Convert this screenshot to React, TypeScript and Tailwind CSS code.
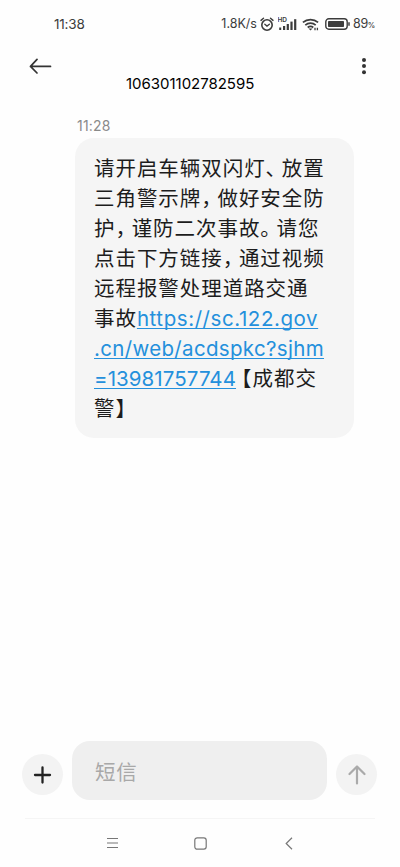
import type { ReactNode } from "react";

function Comma({ children }: { children: ReactNode }) {
  return <span className="tracking-[-4.3px]">{children}</span>;
}

function StatusBar() {
  return (
    <div className="flex h-12 items-center justify-between pl-[54px] pr-[25px] text-[#3c3c3c]">
      <span className="text-[13.5px] tracking-[-0.2px]">11:38</span>
      <div className="flex items-center">
        <span className="text-[12.5px] tracking-[0px]">1.8K/s</span>
        <svg className="ml-[3px]" width="14" height="15" viewBox="0 0 14 15" fill="none" stroke="currentColor" strokeLinecap="round">
          <circle cx="7" cy="8" r="5.2" strokeWidth="1.6" />
          <path d="M1 3.4 3.5 1.3M13 3.4 10.5 1.3" strokeWidth="1.4" />
          <path d="m4.8 7.2 2.2 1.9 2.4-1.9" strokeWidth="1.3" />
        </svg>
        <svg className="ml-[4px]" width="19" height="15" viewBox="0 0 19 15" fill="currentColor">
          <text x="-.5" y="5.4" fontSize="6.5" fontWeight="600">HD</text>
          <rect x="1.2" y="10.5" width="2" height="2.5" />
          <rect x="5" y="9" width="2.2" height="4" />
          <rect x="8.7" y="7" width="2.2" height="6" />
          <rect x="12.4" y="4.6" width="2.2" height="8.4" />
          <rect x="16.1" y="2.2" width="2.2" height="10.8" />
        </svg>
        <svg className="ml-[5px]" width="18" height="15" viewBox="0 0 18 15" fill="none" stroke="currentColor" strokeWidth="1.7">
          <path d="M.9 5.4a11.5 11.5 0 0 1 15.2 0M3.3 8.1a7.8 7.8 0 0 1 10.4 0M5.7 10.5a4.5 4.5 0 0 1 5.6 0" />
          <path d="m6.5 11.4 2 2.1 2-2.1z" fill="currentColor" stroke="none" />
          <path d="M13 10.7v2.6M15.4 10.7v2.6" strokeWidth="1.3" />
        </svg>
        <svg className="ml-[5px]" width="25" height="12" viewBox="0 0 25 12" fill="none">
          <rect x=".8" y=".8" width="21.4" height="10.4" rx="3" stroke="currentColor" strokeWidth="1.4" />
          <rect x="3" y="3" width="16" height="6" rx=".8" fill="currentColor" />
          <path d="M24 4.3v3.4" stroke="currentColor" strokeWidth="1.5" />
        </svg>
        <span className="ml-[3px] text-[12.5px] tracking-[-0.3px]">
          89<span className="text-[7.5px] font-medium">%</span>
        </span>
      </div>
    </div>
  );
}

function Header() {
  return (
    <header className="flex h-[60px] items-start pl-[29px] pr-[32px]">
      <svg className="mt-[10px]" width="23" height="16" viewBox="0 0 23 16" fill="none" stroke="#333" strokeWidth="1.7" strokeLinecap="round" strokeLinejoin="round">
        <path d="M21.5 8.4H1.5M8 1.4l-6.5 7 6.5 6.6" />
      </svg>
      <h1 className="ml-[74px] mt-[26px] text-[15px] leading-5 tracking-[-0.02px] text-black">106301102782595</h1>
      <svg className="ml-auto mt-[9px]" width="8" height="18" viewBox="0 0 8 18" fill="#333">
        <circle cx="4" cy="3" r="2" />
        <circle cx="4" cy="9" r="2" />
        <circle cx="4" cy="15.2" r="2" />
      </svg>
    </header>
  );
}

function Message() {
  const link = "text-[#2490dc] underline decoration-[1.3px] underline-offset-2 [text-decoration-skip-ink:none]";
  return (
    <div className="ml-[75px] mt-[8px]">
      <time className="ml-[2px] block text-[14px] leading-5 tracking-[0.2px] text-[#8a8a8a]">11:28</time>
      <div className="mt-[2px] h-[300px] w-[279px] whitespace-nowrap rounded-[19px] bg-[#f5f5f5] px-[19px] pt-[16px] text-[20.5px] leading-[30px] tracking-[0.95px] text-[#1c1c1c]">
        <div>请开启车辆双闪灯<Comma>、</Comma>放置</div>
        <div>三角警示牌<Comma>，</Comma>做好安全防</div>
        <div>护<Comma>，</Comma>谨防二次事故<Comma>。</Comma>请您</div>
        <div>点击下方链接<Comma>，</Comma>通过视频</div>
        <div>远程报警处理道路交通</div>
        <div>事故<a className={`${link} tracking-[0.57px]`}>https://sc.122.gov</a></div>
        <div><a className={`${link} tracking-[0.33px]`}>.cn/web/acdspkc?sjhm</a></div>
        <div>
          <a className={`${link} tracking-[0.08px]`}>=13981757744</a>
          <span className="-ml-[5px]">【成都交</span>
        </div>
        <div>警】</div>
      </div>
    </div>
  );
}

function Composer() {
  return (
    <div className="flex items-center pl-[22px] pr-[23px]">
      <button className="mt-[8px] flex size-[41px] items-center justify-center rounded-full bg-[#f3f3f3]">
        <svg width="19" height="18" viewBox="0 0 19 18" fill="none" stroke="#222" strokeWidth="2.3" strokeLinecap="round">
          <path d="M9.5 1.5v15M2 9h15" />
        </svg>
      </button>
      <div className="ml-[9px] flex h-[59px] w-[256px] items-center rounded-[18px] bg-[#efefef] pl-[23px] pt-[5px] text-[20.5px] tracking-[0.95px] text-[#a8a8a8]">
        短信
      </div>
      <button className="ml-[9px] mt-[8px] flex size-[41px] items-center justify-center rounded-full bg-[#f3f3f3]">
        <svg width="18" height="20" viewBox="0 0 18 20" fill="none" stroke="#aaa" strokeWidth="2.2" strokeLinecap="round" strokeLinejoin="round">
          <path d="M9 18.5v-17M1.5 9 9 1.5 16.5 9" />
        </svg>
      </button>
    </div>
  );
}

function NavBar() {
  return (
    <nav className="mx-[25px] mt-[18px] flex h-[49px] items-center border-t border-[#f5f5f5] pl-[81px]">
      <svg width="13" height="12" viewBox="0 0 13 12" stroke="#777" strokeWidth="1.1">
        <path d="M1 1.5h11M1 6h11M1 10.5h11" />
      </svg>
      <svg className="ml-[75px]" width="13" height="13" viewBox="0 0 13 13" fill="none" stroke="#777" strokeWidth="1.2">
        <rect x=".8" y=".8" width="11.4" height="11.4" rx="2.4" />
      </svg>
      <svg className="ml-[78px]" width="8" height="13" viewBox="0 0 8 13" fill="none" stroke="#777" strokeWidth="1.2">
        <path d="M7 .8 1.2 6.5 7 12.2" />
      </svg>
    </nav>
  );
}

export default function App() {
  return (
    <div className="flex h-[867px] w-[400px] flex-col bg-[#fefefe] font-['Inter','Noto_Sans_CJK_SC',sans-serif]">
      <StatusBar />
      <Header />
      <main className="flex-1">
        <Message />
      </main>
      <Composer />
      <NavBar />
    </div>
  );
}
